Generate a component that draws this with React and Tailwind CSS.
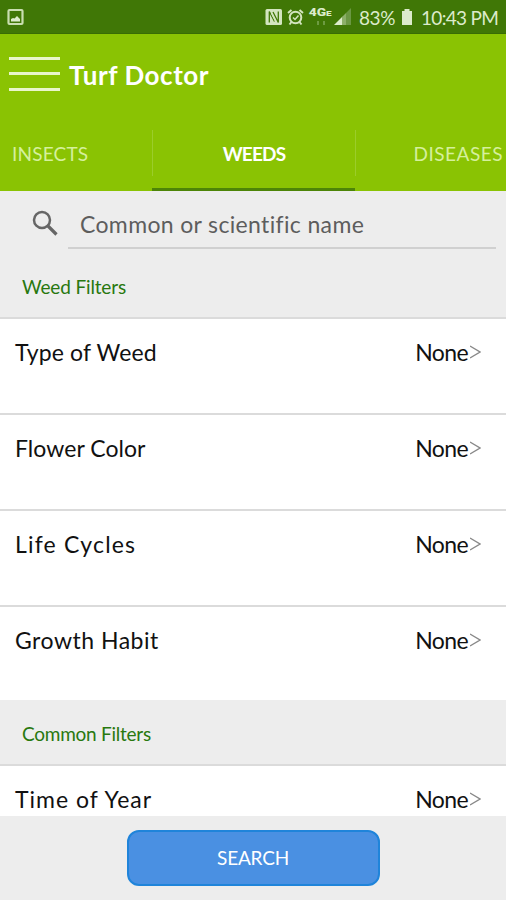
const weedFilters = [
  { label: 'Type of Weed', tracking: 'tracking-[0.15px]' },
  { label: 'Flower Color', tracking: 'tracking-[0.05px]' },
  { label: 'Life Cycles', tracking: 'tracking-[1.2px]' },
  { label: 'Growth Habit', tracking: 'tracking-[0.5px]' },
];

function StatusBar() {
  return (
    <div className="flex h-[34px] shrink-0 items-center border-b border-[#386c05] bg-[#407706] pl-[7px] pr-2 text-[#dcebcb]">
      <svg className="h-[18px] w-[18px]" viewBox="0 0 18 18" fill="none">
        <rect x="1.500" y="2" width="14" height="14" rx="1" stroke="#c9deb0" strokeWidth="2.200" />
        <path d="M4 13.500V11L6 10L7.500 10.500L10 8L13 11V13.500Z" fill="#dcebcb" />
      </svg>
      <svg className="ml-auto h-[18px] w-[18px]" viewBox="0 0 18 18" fill="none">
        <rect x=".5" y="1" width="16.500" height="16" rx="1.500" fill="#d3e5bf" />
        <path d="M4.300 14.500V3.500L9.500 13.500M8 4L13.300 14.500V3.500" stroke="#407706" strokeWidth="1.300" />
        <path d="M6.500 5L11 14" stroke="#d3e5bf" strokeWidth="1.500" />
      </svg>
      <svg className="ml-[4px] h-[18px] w-[17px]" viewBox="0 0 17 18" fill="none" stroke="#d3e5bf">
        <circle cx="8.500" cy="9.500" r="5.800" strokeWidth="2" />
        <path d="M1 5L4.500 2M16 5L12.500 2M4.500 14L2.500 16.500M12.500 14L14.500 16.500" strokeWidth="2" />
        <path d="M6 9.500L8 11.500L11.500 7.500" strokeWidth="1.500" />
      </svg>
      <div className="ml-[5px] flex h-[17px] w-[23px] flex-col items-center">
        <span className="origin-center scale-x-125 whitespace-nowrap font-['Roboto'] text-[11px] font-black leading-[10px]">4G<span className="text-[8px]">E</span></span>
        <svg className="mt-[2px] h-[4px] w-[10px]" viewBox="0 0 10 4" fill="#6d9b42">
          <path d="M1 0H3V4H1ZM7 0H9V4H7Z" />
        </svg>
      </div>
      <svg className="ml-[2px] h-[17px] w-[18px]" viewBox="0 0 18 17">
        <path d="M0 17L8.500 8.500V17Z" fill="#dcebcb" />
        <path d="M8.500 17V8.500L12 5V17Z" fill="#8caf69" />
        <path d="M12 17V5L17 0V17Z" fill="#6b9743" />
      </svg>
      <span className="ml-[7px] w-[37px] whitespace-nowrap pt-px text-[19px] leading-none tracking-[-0.4px]">83%</span>
      <svg className="ml-[5px] h-[17px] w-[12px]" viewBox="0 0 12 17" fill="#dcebcb">
        <path d="M3.500 1H8.500V3H11V17H1V3H3.500Z" />
      </svg>
      <span className="ml-[8px] w-[77px] whitespace-nowrap pt-px text-[19px] leading-none tracking-[-0.7px]">10:43 PM</span>
    </div>
  );
}

function Header() {
  return (
    <header className="flex h-[157px] shrink-0 flex-col bg-[#8ac303] text-white">
      <div className="flex h-[81px] items-center pl-[9px]">
        <div className="flex w-[51px] -translate-y-px flex-col gap-[12.500px]">
          <span className="h-[3px] bg-[#e9f6cb]" />
          <span className="h-[3px] bg-[#e9f6cb]" />
          <span className="h-[3px] bg-[#e9f6cb]" />
        </div>
        <h1 className="ml-[9px] whitespace-nowrap text-[26px] font-bold leading-none tracking-[0.55px]">Turf Doctor</h1>
      </div>
      <nav className="flex h-[76px] text-[19px] leading-none">
        <div className="flex w-[152px] items-center pl-3 text-[#d5f09c]"><span className="tracking-[0.2px]">INSECTS</span></div>
        <div className="flex w-[203px] flex-col justify-between">
          <div className="mt-[15px] flex h-[46px] items-center justify-center border-l border-[#9bcd2b]">
            <span className="font-bold tracking-[-0.8px]">WEEDS</span>
          </div>
          <span className="h-[3px] bg-[#4d8508]" />
        </div>
        <div className="mt-[15px] flex h-[46px] grow items-center justify-end border-l border-[#9bcd2b] pr-[3px] text-[#d5f09c]"><span className="tracking-[0.5px]">DISEASES</span></div>
      </nav>
    </header>
  );
}

function FilterRow({ label, tracking }) {
  return (
    <div className="flex h-24 shrink-0 items-start justify-between border-t-2 border-[#dbdbdb] bg-white pl-[15px] pr-[25px] pt-5 text-[23px] leading-[26px] text-[#111]">
      <span className={tracking}>{label}</span>
      <span className="flex items-center tracking-[-0.6px]">
        None
        <svg className="ml-[2px] h-[14px] w-[11px]" viewBox="0 0 11 14" fill="none" stroke="#888" strokeWidth="1.400">
          <path d="M0 1L10 7L0 13" />
        </svg>
      </span>
    </div>
  );
}

export default function App() {
  return (
    <div className="flex h-[900px] w-[506px] flex-col overflow-hidden bg-[#ededed] font-['Lato',sans-serif]">
      <StatusBar />
      <Header />
      <main className="flex min-h-0 grow flex-col overflow-hidden">
        <div className="flex h-[58px] shrink-0 pl-8 pr-[10px]">
          <svg className="mt-[19px] h-[26px] w-[26px]" viewBox="0 0 26 26" fill="none" stroke="#666">
            <circle cx="10" cy="10" r="8" strokeWidth="2.500" />
            <path d="M15.500 15.500L24.500 24.500" strokeWidth="3.200" />
          </svg>
          <div className="ml-[10px] grow border-b-2 border-[#d0d0d0] pl-3 pt-[20px] text-[23px] leading-[26px] tracking-[0.35px] text-[#5d5d5d]">
            Common or scientific name
          </div>
        </div>
        <h2 className="flex h-[68px] shrink-0 items-center pl-[22px] pt-[8px] text-[19px] tracking-[-0.15px] text-[#28780f]">Weed Filters</h2>
        {weedFilters.map((filter) => <FilterRow key={filter.label} {...filter} />)}
        <h2 className="-mt-[1px] flex h-[64px] shrink-0 items-center bg-[#ededed] pl-[22px] pt-[4px] text-[19px] tracking-[-0.25px] text-[#28780f]">Common Filters</h2>
        <FilterRow label="Time of Year" tracking="tracking-[1px]" />
      </main>
      <footer className="flex h-[84px] shrink-0 justify-center pt-[14px]">
        <button className="h-14 w-[253px] rounded-xl border-2 border-[#1f84da] bg-[#4a90e2] pt-px text-[19px] tracking-[-0.2px] text-white">SEARCH</button>
      </footer>
    </div>
  );
}
